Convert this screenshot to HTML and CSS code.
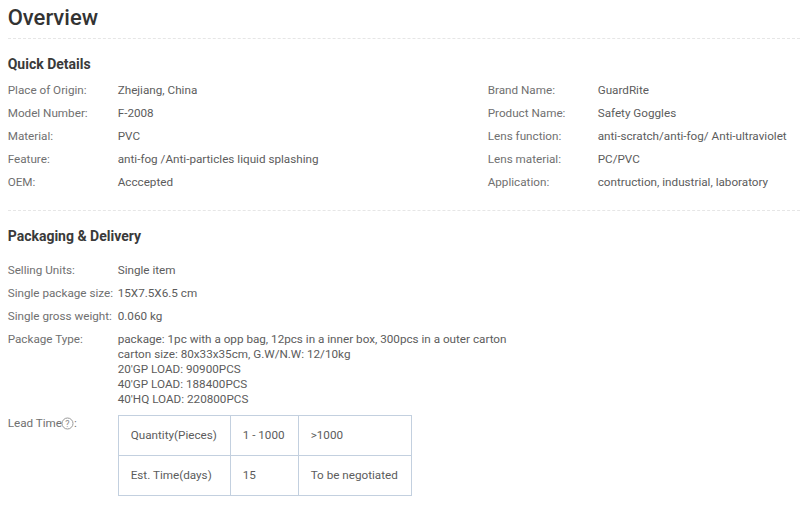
FILE: index.html
```html
<!DOCTYPE html>
<html lang="en">
<head>
<meta charset="utf-8">
<title>Overview</title>
<link rel="stylesheet" href="styles.css">
</head>
<body>
<main class="page">
<h1 class="title">Overview</h1>
<section class="section quick">
<h2 class="heading">Quick Details</h2>
<div class="columns">
<dl class="attrs">
<div class="row"><dt>Place of Origin:</dt><dd>Zhejiang, China</dd></div>
<div class="row"><dt>Model Number:</dt><dd>F-2008</dd></div>
<div class="row"><dt>Material:</dt><dd>PVC</dd></div>
<div class="row"><dt>Feature:</dt><dd>anti-fog /Anti-particles liquid splashing</dd></div>
<div class="row"><dt>OEM:</dt><dd>Acccepted</dd></div>
</dl>
<dl class="attrs">
<div class="row"><dt>Brand Name:</dt><dd>GuardRite</dd></div>
<div class="row"><dt>Product Name:</dt><dd>Safety Goggles</dd></div>
<div class="row"><dt>Lens function:</dt><dd>anti-scratch/anti-fog/ Anti-ultraviolet</dd></div>
<div class="row"><dt>Lens material:</dt><dd>PC/PVC</dd></div>
<div class="row"><dt>Application:</dt><dd>contruction, industrial, laboratory</dd></div>
</dl>
</div>
</section>
<section class="section packaging">
<h2 class="heading">Packaging &amp; Delivery</h2>
<dl class="attrs">
<div class="row"><dt>Selling Units:</dt><dd>Single item</dd></div>
<div class="row"><dt>Single package size:</dt><dd>15X7.5X6.5 cm</dd></div>
<div class="row"><dt>Single gross weight:</dt><dd>0.060 kg</dd></div>
<div class="row"><dt>Package Type:</dt><dd>package: 1pc with a opp bag, 12pcs in a inner box, 300pcs in a outer carton<br>carton size: 80x33x35cm, G.W/N.W: 12/10kg<br>20'GP LOAD: 90900PCS<br>40'GP LOAD: 188400PCS<br>40'HQ LOAD: 220800PCS</dd></div>
<div class="row lead"><dt>Lead Time<svg class="help" viewBox="0 0 13 13" aria-hidden="true"><circle cx="6.5" cy="6.5" r="5.5" fill="none" stroke="#999" stroke-width="1"/><text x="6.5" y="9.5" text-anchor="middle" class="help-mark">?</text></svg>:</dt>
<dd class="lead-cell"><table class="lead-table">
<tr><td class="c1">Quantity(Pieces)</td><td class="c2">1 - 1000</td><td class="c3">&gt;1000</td></tr>
<tr><td class="c1">Est. Time(days)</td><td class="c2">15</td><td class="c3">To be negotiated</td></tr>
</table></dd></div>
</dl>
</section>
</main>
</body>
</html>
```
FILE: styles.css
```css
* { box-sizing: border-box; }
html, body { margin: 0; padding: 0; background: #fff; }
body { font-family: Roboto, "Liberation Sans", sans-serif; font-size: 11.7px; line-height: 15px; color: #5c5c5c; overflow: hidden; }
.page { width: 802px; height: 512px; padding: 0 2px 0 7.7px; overflow: hidden; }
.title { margin: 0; height: 39px; font-size: 22px; line-height: 35px; font-weight: 500; color: #333; border-bottom: 1px dashed #e6e6e6; }
.section { border-bottom: 1px dashed #e6e6e6; }
.heading { margin: 0; font-size: 14px; line-height: 20px; font-weight: 700; color: #3a3a3a; }
.quick { height: 172px; padding-top: 15px; }
.packaging { padding-top: 15px; border-bottom: 0; }
.columns { display: flex; margin-top: 9px; }
.columns .attrs { width: 480px; flex: none; }
.attrs { margin: 0; }
.row { display: flex; margin-bottom: 8px; }
.packaging .attrs { margin-top: 17px; }
dt { width: 110px; flex: none; color: #707070; }
.lead dt { padding-top: 1px; }
dd { margin: 0; }
.help { width: 13px; height: 13px; margin-left: -1px; vertical-align: -3px; }
.help-mark { font-size: 9px; fill: #888; font-family: Roboto, sans-serif; }
.lead-table { border-collapse: collapse; table-layout: fixed; width: 294px; }
.lead-table td { border: 1px solid #c3d0df; height: 40px; padding: 0 12px; white-space: nowrap; }
.c1 { width: 112px; }
.c2 { width: 68px; }
.c3 { width: 113px; }
```
